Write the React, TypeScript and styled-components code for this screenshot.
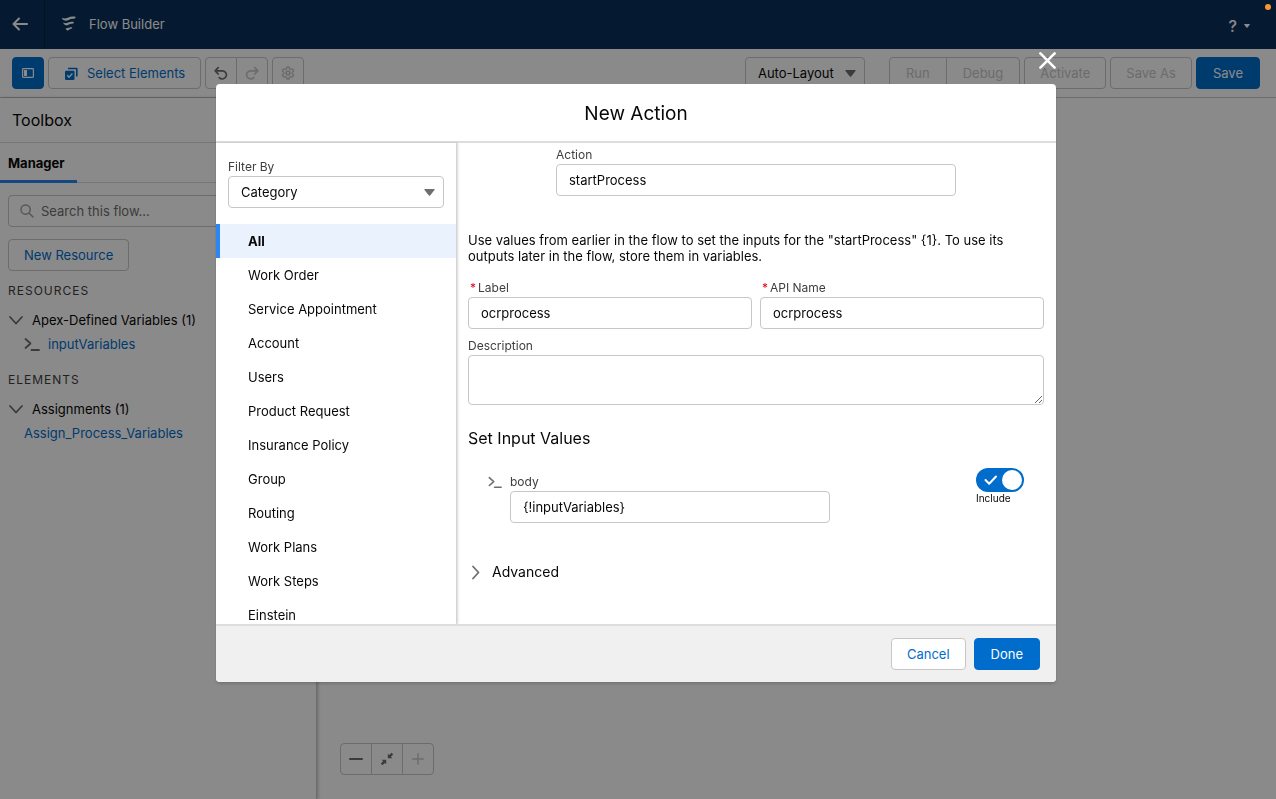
import React, { useState } from "react";
import styled, { createGlobalStyle, css } from "styled-components";

const GlobalStyle = createGlobalStyle`
  *, *::before, *::after { box-sizing: border-box; }
  body {
    margin: 0;
    background: #fff;
    color: #080707;
    font-family: Inter, "Liberation Sans", sans-serif;
    font-size: 13px;
    line-height: 16px;
  }
  button, input, select, textarea { font: inherit; color: inherit; }
  h1, h2, h3, p, ul { margin: 0; padding: 0; font-weight: 400; }
  ul { list-style: none; }
`;

const blue = "#006dcc";
const line = "#c9c7c5";

/* ---------- page frame ---------- */

const Page = styled.div`
  display: flex;
  flex-direction: column;
  min-height: 100vh;
`;

const Header = styled.header`
  display: flex;
  align-items: center;
  height: 49px;
  background: #0a315c;
  color: #fff;
`;

const BackLink = styled.a`
  display: flex;
  align-items: center;
  justify-content: center;
  width: 45px;
  height: 100%;
  padding: 0 4px 2px 0;
  border-right: 1px solid #06203e;
  color: #fff;
`;

const AppTitle = styled.h1`
  display: flex;
  align-items: center;
  gap: 12px;
  padding: 0 0 1px 16px;
  font-size: 13px;
`;

const HelpButton = styled.button`
  display: flex;
  align-items: center;
  gap: 7px;
  margin: 2px 26px 0 auto;
  padding: 0;
  border: 0;
  background: none;
  color: #fff;
  font-size: 16px;
  font-weight: 500;
`;

const Toolbar = styled.div`
  display: flex;
  align-items: center;
  gap: 4px;
  height: 49px;
  padding: 0 16px 0 12px;
  border-bottom: 1px solid ${line};
`;

const Button = styled.button<{ $variant?: "brand" }>`
  display: flex;
  align-items: center;
  justify-content: center;
  gap: 9px;
  height: 32px;
  padding: 0 15px;
  border: 1px solid ${line};
  border-radius: 4px;
  background: #fff;
  color: ${blue};
  white-space: nowrap;
  ${(p) =>
    p.$variant === "brand" &&
    css`
      padding: 0 16px;
      border-color: ${blue};
      background: ${blue};
      color: #fff;
    `}
  &:disabled { color: ${line}; }
`;

const IconButton = styled(Button)`
  width: 32px;
  padding: 0;
  color: ${(p) => (p.$variant === "brand" ? "#fff" : "#706e6b")};
`;

const ButtonGroup = styled.div<{ $roomy?: boolean }>`
  display: flex;
  & > button { border-radius: 0; }
  & > button + button { margin-left: -1px; }
  & > button:first-child { border-radius: 4px 0 0 4px; }
  & > button:last-child { border-radius: 0 4px 4px 0; }
  ${(p) => p.$roomy && css`& > button { padding: 0 16px; }`}
`;

const ToolbarEnd = styled.div`
  display: flex;
  gap: 4px;
  margin-left: auto;
`;

const SelectBox = styled.div<{ $wide?: boolean }>`
  display: grid;
  align-items: center;
  width: ${(p) => (p.$wide ? "100%" : "120px")};
  margin-right: ${(p) => (p.$wide ? "0" : "20px")};
  & > * { grid-area: 1 / 1; }
  & > svg { justify-self: end; margin-right: 9px; pointer-events: none; }
`;

const Select = styled.select`
  appearance: none;
  width: 100%;
  height: 32px;
  padding: 0 28px 0 12px;
  border: 1px solid ${line};
  border-radius: 4px;
  background: #fff;
`;

const Workspace = styled.main`
  display: flex;
  flex: 1;
`;

const Sidebar = styled.aside`
  width: 317px;
  border-right: 1px solid ${line};
  box-shadow: 1px 0 3px rgba(0, 0, 0, 0.25);
`;

const SidebarTitle = styled.h2`
  height: 45px;
  padding-left: 12px;
  border-bottom: 1px solid #dddbda;
  font-size: 16px;
  line-height: 44px;
`;

const TabList = styled.div`
  display: flex;
  height: 40px;
  border-bottom: 1px solid #dddbda;
`;

const Tab = styled.button`
  height: 40px;
  padding: 2px 12px 0 8px;
  border: 0;
  border-bottom: 3px solid #2b83ee;
  background: none;
  font-weight: 700;
`;

const SidebarBody = styled.div`
  display: flex;
  flex-direction: column;
  align-items: flex-start;
  padding: 12px 8px;
`;

const SearchBox = styled.label`
  display: flex;
  align-items: center;
  gap: 7px;
  width: 100%;
  height: 32px;
  margin-bottom: 12px;
  padding: 0 11px;
  border: 1px solid ${line};
  border-radius: 4px;
  color: #706e6b;
  & > svg { color: #a09e9b; }
`;

const SearchInput = styled.input`
  flex: 1;
  min-width: 0;
  padding: 0;
  border: 0;
  outline: 0;
  background: none;
  &::placeholder { color: #706e6b; opacity: 1; }
`;

const GroupTitle = styled.h3`
  margin-top: 12px;
  color: #3e3e3c;
  font-size: 12px;
  letter-spacing: 1px;
`;

const Branch = styled.button`
  display: flex;
  align-items: center;
  gap: 8px;
  height: 24px;
  margin-top: 9px;
  padding: 0;
  border: 0;
  background: none;
`;

const Leaf = styled.a`
  display: flex;
  align-items: center;
  gap: 8px;
  height: 24px;
  margin-bottom: 4px;
  padding-left: 16px;
  color: ${blue};
  text-decoration: none;
`;

const Canvas = styled.section`
  display: flex;
  flex: 1;
  align-items: flex-end;
  padding: 24px 23px;
`;

/* ---------- dialog ---------- */

const Scrim = styled.div`
  position: fixed;
  inset: 0;
  display: flex;
  padding: 84px 220px 117px 216px;
  background: rgba(0, 0, 0, 0.46);
`;

const RecordingDot = styled.span`
  position: absolute;
  top: 4px;
  right: 5px;
  width: 6px;
  height: 6px;
  border-radius: 50%;
  background: #ff9430;
`;

const Dialog = styled.div`
  position: relative;
  display: flex;
  flex: 1;
  flex-direction: column;
  min-width: 0;
  border-radius: 4px;
  background: #fff;
  box-shadow: 0 2px 3px rgba(0, 0, 0, 0.16);
`;

const CloseButton = styled.button`
  position: absolute;
  top: -32px;
  right: 0;
  display: flex;
  padding: 0;
  border: 0;
  background: none;
  color: #fff;
`;

const DialogHeader = styled.header`
  height: 59px;
  border-bottom: 2px solid #dddddd;
  font-size: 19px;
  line-height: 60px;
  text-align: center;
  & > h2 { font-size: inherit; }
`;

const DialogBody = styled.div`
  display: flex;
  flex: 1;
  min-height: 0;
`;

const DialogFooter = styled.footer`
  display: flex;
  justify-content: flex-end;
  gap: 8px;
  padding: 12px 16px;
  border-top: 2px solid #dddddd;
  border-radius: 0 0 4px 4px;
  background: #f0f0f0;
`;

const Filters = styled.nav`
  display: flex;
  flex-direction: column;
  width: 241px;
  overflow: hidden;
  border-right: 1px solid #d4d4d4;
  box-shadow: 1px 0 2px rgba(0, 0, 0, 0.16);
`;

const FilterField = styled.div`
  padding: 16px 12px;
`;

const Category = styled.button<{ $active: boolean }>`
  display: block;
  width: 100%;
  height: 34px;
  padding: 0 28px;
  border: 0;
  border-left: 4px solid ${(p) => (p.$active ? "#2b87f3" : "transparent")};
  background: ${(p) => (p.$active ? "#eaf2fe" : "none")};
  font-weight: ${(p) => (p.$active ? 700 : 400)};
  text-align: left;
`;

const Form = styled.form`
  display: flex;
  flex: 1;
  flex-direction: column;
  min-width: 0;
  overflow: hidden;
  padding: 4px 12px 0 11px;
`;

const Field = styled.div`
  min-width: 0;
`;

const ActionField = styled(Field)`
  width: 400px;
  margin: 0 auto 36px;
`;

const Label = styled.label<{ $required?: boolean }>`
  display: block;
  height: 17px;
  color: #3e3e3c;
  font-size: 12px;
  ${(p) =>
    p.$required &&
    css`
      &::before {
        content: "*";
        margin: 0 2px;
        color: #e2001a;
      }
    `}
`;

const inputLook = css`
  display: block;
  width: 100%;
  border: 1px solid ${line};
  border-radius: 4px;
  background: #fff;
`;

const Input = styled.input`
  ${inputLook}
  height: 32px;
  padding: 0 12px;
`;

const TextArea = styled.textarea`
  ${inputLook}
  height: 50px;
  padding: 8px 12px;
  resize: vertical;
`;

const FieldRow = styled.div`
  display: grid;
  grid-template-columns: 1fr 1fr;
  gap: 8px;
  margin: 16px 0 9px;
`;

const SectionTitle = styled.h3`
  margin: 21px 0 18px;
  font-size: 16px;
  line-height: 24px;
`;

const InputRow = styled.div`
  display: flex;
  align-items: flex-start;
  gap: 8px;
  padding: 0 20px;
  & > svg { margin-top: 7px; }
`;

const ValueField = styled(Field)`
  width: 320px;
  padding-top: 6px;
`;

const Toggle = styled.label`
  display: grid;
  width: 48px;
  margin-left: auto;
  font-size: 10px;
  line-height: 12px;
`;

const ToggleInput = styled.input`
  grid-area: 1 / 1;
  appearance: none;
  width: 48px;
  height: 24px;
  margin: 0;
  border-radius: 12px;
  background: #b0adab;
  &:checked { background: ${blue}; }
`;

const ToggleArt = styled.svg`
  grid-area: 1 / 1;
  pointer-events: none;
`;

const Advanced = styled.button`
  display: flex;
  align-items: center;
  gap: 8px;
  align-self: flex-start;
  margin-top: 37px;
  padding: 0;
  border: 0;
  background: none;
  font-size: 14px;
  line-height: 24px;
`;

/* ---------- icons ---------- */

const stroke = { fill: "none", stroke: "currentColor" };

const BackIcon = () => (
  <svg width="16" height="16" viewBox="0 0 16 16" {...stroke} strokeWidth="2" strokeLinecap="round" strokeLinejoin="round" aria-hidden="true">
    <path d="M15 8H1.5M7 2.5L1.5 8L7 13.5" />
  </svg>
);

const FlowIcon = () => (
  <svg width="16" height="16" viewBox="0 0 16 16" fill="currentColor" aria-hidden="true">
    <path d="M.8 1.800C2.500 2.800 4.500 2.800 6.800 1.800C9.500 .6 12 .2 14.800 1C14.200 2.600 13 3 11.300 2.800C9 2.600 7.800 4.700 5.300 4.700C3 4.700 1.300 3.700.8 1.800Z" />
    <path d="M2.200 6.600C3.800 7.500 5.400 7.400 7.200 6.600C9 5.800 11 5.600 13 6.200C12.500 7.600 11.500 7.900 10.200 7.800C8.400 7.700 7.600 9.400 5.700 9.400C3.800 9.400 2.600 8.300 2.200 6.600Z" />
    <path d="M4.700 12C5.800 12.500 6.700 12.300 7.700 11.800C9 11.200 10 11.100 11.300 11.500C10.900 12.700 10.300 12.900 9.400 12.900C8.300 12.900 7.900 14.500 6.700 14.500C5.500 14.500 4.900 13.400 4.700 12Z" />
  </svg>
);

const PanelIcon = () => (
  <svg width="12" height="12" viewBox="0 0 12 12" aria-hidden="true">
    <rect x=".6" y="1.600" width="10.800" height="8.800" rx=".8" fill="none" stroke="#fff" strokeWidth="1.200" />
    <rect x="2" y="3" width="3" height="6" fill="#fff" />
  </svg>
);

const SelectElementsIcon = () => (
  <svg width="14" height="14" viewBox="0 0 14 14" aria-hidden="true">
    <path d="M4 2.500H12.800V10.500" fill="none" stroke={blue} strokeWidth="1.600" strokeLinejoin="round" />
    <rect x="1" y="4.800" width="9.500" height="9.200" rx="1.200" fill={blue} />
    <path d="M3.200 9.300L5 11.200L8.400 7.500" fill="none" stroke="#fff" strokeWidth="1.300" />
  </svg>
);

const UndoIcon = ({ flip }: { flip?: boolean }) => (
  <svg width="14" height="14" viewBox="0 0 14 14" {...stroke} strokeWidth="1.700" strokeLinecap="round" strokeLinejoin="round" aria-hidden="true">
    <g transform={flip ? "translate(14 0) scale(-1 1)" : undefined}>
      <path d="M4.200 1.600L1.200 4.800L4.200 8M1.400 4.800H8.600A4.100 4.100 0 1 1 5.200 11.600" />
    </g>
  </svg>
);

const GearIcon = () => (
  <svg width="14" height="14" viewBox="0 0 14 14" {...stroke} aria-hidden="true">
    <path strokeWidth="1.400" strokeLinejoin="round" d="M5.900 1H8.100L8.500 2.800L9.800 3.500L11.600 3L12.700 4.900L11.300 6.200V7.800L12.700 9.100L11.600 11L9.800 10.500L8.500 11.200L8.100 13H5.900L5.500 11.200L4.200 10.500L2.400 11L1.300 9.100L2.700 7.800V6.200L1.300 4.900L2.400 3L4.200 3.500L5.500 2.800Z" />
    <circle cx="7" cy="7" r="1.900" strokeWidth="1.600" />
  </svg>
);

const Caret = ({ width = 11, height = 7, color = "#706e6b" }) => (
  <svg width={width} height={height} viewBox="0 0 11 7" fill={color} aria-hidden="true">
    <path d="M.8 0H10.200Q11 .2 10.500 1L6.100 6.500Q5.500 7 4.900 6.500L.5 1Q0 .2.800 0Z" />
  </svg>
);

const SearchIcon = () => (
  <svg width="14" height="14" viewBox="0 0 14 14" {...stroke} strokeWidth="1.400" strokeLinecap="round" aria-hidden="true">
    <circle cx="5.600" cy="5.600" r="4.600" />
    <path d="M9.200 9.200L13 13" />
  </svg>
);

const Chevron = ({ right }: { right?: boolean }) => (
  <svg width="16" height="16" viewBox="0 0 16 16" {...stroke} stroke="#706e6b" strokeWidth="1.800" strokeLinecap="round" strokeLinejoin="round" aria-hidden="true">
    <path d={right ? "M5 2.500L10.500 8.500L5 14.500" : "M2 5L8 11.500L14 5"} />
  </svg>
);

const PromptIcon = ({ size = 16 }) => (
  <svg width={size} height={size} viewBox="0 0 16 16" {...stroke} stroke="#706e6b" strokeWidth="1.800" strokeLinecap="round" strokeLinejoin="round" aria-hidden="true">
    <path d="M1.500 3L6.500 7.500L1.500 12M7.500 14H15" />
  </svg>
);

const MinusIcon = () => (
  <svg width="14" height="14" viewBox="0 0 14 14" aria-hidden="true">
    <rect y="6" width="14" height="2" rx="1" fill="#706e6b" />
  </svg>
);

const PlusIcon = () => (
  <svg width="12" height="12" viewBox="0 0 12 12" {...stroke} strokeWidth="1.400" strokeLinecap="round" aria-hidden="true">
    <path d="M6 .7V11.300M.7 6H11.300" />
  </svg>
);

const FitIcon = () => (
  <svg width="14" height="14" viewBox="0 0 14 14" fill="#706e6b" aria-hidden="true">
    <path d="M7.800 1.700L9.200 3.100L11.600.8L13.200 2.400L10.900 4.800L12.300 6.200H7.800Z" />
    <path d="M6.200 12.300L4.800 10.900L2.400 13.200L.8 11.600L3.100 9.200L1.700 7.800H6.200Z" />
  </svg>
);

const CloseIcon = () => (
  <svg width="17" height="17" viewBox="0 0 17 17" {...stroke} strokeWidth="2.600" strokeLinecap="round" aria-hidden="true">
    <path d="M1.400 1.400L15.600 15.600M15.600 1.400L1.400 15.600" />
  </svg>
);

const categories = [
  "All",
  "Work Order",
  "Service Appointment",
  "Account",
  "Users",
  "Product Request",
  "Insurance Policy",
  "Group",
  "Routing",
  "Work Plans",
  "Work Steps",
  "Einstein",
];

export default function App() {
  const [active, setActive] = useState("All");
  const [include, setInclude] = useState(true);

  return (
    <>
      <GlobalStyle />
      <Page>
        <Header>
          <BackLink href="#" aria-label="Back"><BackIcon /></BackLink>
          <AppTitle><FlowIcon />Flow Builder</AppTitle>
          <HelpButton type="button">? <Caret width={6} height={4} color="#fff" /></HelpButton>
        </Header>

        <Toolbar>
          <IconButton $variant="brand" aria-label="Toggle toolbox"><PanelIcon /></IconButton>
          <Button><SelectElementsIcon />Select Elements</Button>
          <ButtonGroup>
            <IconButton aria-label="Undo"><UndoIcon /></IconButton>
            <IconButton aria-label="Redo" disabled><UndoIcon flip /></IconButton>
          </ButtonGroup>
          <IconButton aria-label="Settings" disabled><GearIcon /></IconButton>
          <ToolbarEnd>
            <SelectBox>
              <Select aria-label="Layout"><option>Auto-Layout</option></Select>
              <Caret />
            </SelectBox>
            <ButtonGroup $roomy>
              <Button disabled>Run</Button>
              <Button disabled>Debug</Button>
            </ButtonGroup>
            <Button disabled>Activate</Button>
            <Button disabled>Save As</Button>
            <Button $variant="brand">Save</Button>
          </ToolbarEnd>
        </Toolbar>

        <Workspace>
          <Sidebar>
            <SidebarTitle>Toolbox</SidebarTitle>
            <TabList role="tablist"><Tab role="tab" aria-selected>Manager</Tab></TabList>
            <SidebarBody>
              <SearchBox>
                <SearchIcon />
                <SearchInput type="search" aria-label="Search this flow" placeholder="Search this flow..." />
              </SearchBox>
              <Button>New Resource</Button>
              <GroupTitle>RESOURCES</GroupTitle>
              <Branch><Chevron />Apex-Defined Variables (1)</Branch>
              <Leaf href="#"><PromptIcon />inputVariables</Leaf>
              <GroupTitle>ELEMENTS</GroupTitle>
              <Branch><Chevron />Assignments (1)</Branch>
              <Leaf href="#">Assign_Process_Variables</Leaf>
            </SidebarBody>
          </Sidebar>
          <Canvas>
            <ButtonGroup>
              <IconButton aria-label="Zoom out"><MinusIcon /></IconButton>
              <IconButton aria-label="Zoom to fit"><FitIcon /></IconButton>
              <IconButton aria-label="Zoom in" disabled><PlusIcon /></IconButton>
            </ButtonGroup>
          </Canvas>
        </Workspace>
      </Page>

      <Scrim>
        <RecordingDot />
        <Dialog role="dialog" aria-modal="true" aria-labelledby="dialog-title">
          <CloseButton type="button" aria-label="Close"><CloseIcon /></CloseButton>
          <DialogHeader><h2 id="dialog-title">New Action</h2></DialogHeader>
          <DialogBody>
            <Filters>
              <FilterField>
                <Label htmlFor="filter">Filter By</Label>
                <SelectBox $wide>
                  <Select id="filter"><option>Category</option></Select>
                  <Caret />
                </SelectBox>
              </FilterField>
              <ul>
                {categories.map((name) => (
                  <li key={name}>
                    <Category type="button" $active={name === active} onClick={() => setActive(name)}>{name}</Category>
                  </li>
                ))}
              </ul>
            </Filters>
            <Form>
              <ActionField>
                <Label htmlFor="action">Action</Label>
                <Input id="action" defaultValue="startProcess" />
              </ActionField>
              <p>
                {'Use values from earlier in the flow to set the inputs for the "startProcess" {1}. To use its outputs later in the flow, store them in variables.'}
              </p>
              <FieldRow>
                <Field>
                  <Label htmlFor="label" $required>Label</Label>
                  <Input id="label" defaultValue="ocrprocess" />
                </Field>
                <Field>
                  <Label htmlFor="api" $required>API Name</Label>
                  <Input id="api" defaultValue="ocrprocess" />
                </Field>
              </FieldRow>
              <Field>
                <Label htmlFor="description">Description</Label>
                <TextArea id="description" />
              </Field>
              <SectionTitle>Set Input Values</SectionTitle>
              <InputRow>
                <PromptIcon size={14} />
                <ValueField>
                  <Label htmlFor="body">body</Label>
                  <Input id="body" defaultValue="{!inputVariables}" />
                </ValueField>
                <Toggle>
                  <ToggleInput type="checkbox" checked={include} onChange={() => setInclude(!include)} />
                  <ToggleArt width="48" height="24" viewBox="0 0 48 24" aria-hidden="true">
                    <circle cx={include ? 36 : 12} cy="12" r="10" fill="#fff" />
                    {include && (
                      <path d="M9.500 12L13.200 15.700L20 8.500" fill="none" stroke="#fff" strokeWidth="2" strokeLinecap="round" strokeLinejoin="round" />
                    )}
                  </ToggleArt>
                  Include
                </Toggle>
              </InputRow>
              <Advanced type="button"><Chevron right />Advanced</Advanced>
            </Form>
          </DialogBody>
          <DialogFooter>
            <Button type="button">Cancel</Button>
            <Button type="button" $variant="brand">Done</Button>
          </DialogFooter>
        </Dialog>
      </Scrim>
    </>
  );
}
